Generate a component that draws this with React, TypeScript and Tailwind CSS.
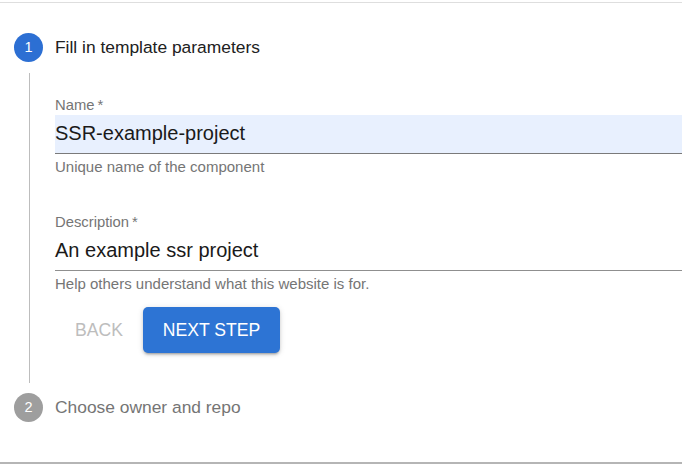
import React from "react";

const font = { fontFamily: '"Liberation Sans", Arial, sans-serif' };

function StepIcon({ n, active }: { n: number; active: boolean }) {
  return (
    <div
      className={`flex h-[29px] w-[29px] shrink-0 items-center justify-center rounded-full text-[14.5px] leading-none text-white ${
        active ? "bg-[#2c6fd3]" : "bg-[#9e9e9e]"
      }`}
    >
      {n}
    </div>
  );
}

export default function App() {
  return (
    <div
      className="relative flex h-[465px] w-[682px] flex-col overflow-hidden bg-white"
      style={font}
    >
      <div className="mt-[2px] h-px w-full bg-[#dedede]" />

      {/* Step 1 header */}
      <div className="mt-[30px] flex items-center gap-[12px] pl-[14px]">
        <StepIcon n={1} active />
        <span className="-mt-[2px] text-[17.4px] leading-[20px] text-[#212121]">
          Fill in template parameters
        </span>
      </div>

      {/* Step 1 content */}
      <div className="ml-[29px] mt-[11px] border-l border-[#bdbdbd] pb-[30px] pl-[25px] pt-[24px]">
        <div className="text-[14.8px] leading-[17px] text-[#757575]">
          Name<span className="ml-[3px]">*</span>
        </div>
        <div className="mt-[1px] h-[39px] border-b border-[#7a7a7a] bg-[#e8f0fe] pt-[7px]">
          <div className="text-[20px] leading-[23px] text-[#1a1a1a]">
            SSR-example-project
          </div>
        </div>
        <div className="mt-[4px] text-[15px] leading-[17px] text-[#757575]">
          Unique name of the component
        </div>

        <div className="mt-[39px] text-[14.8px] leading-[17px] text-[#757575]">
          Description<span className="ml-[3px]">*</span>
        </div>
        <div className="mt-[1px] h-[39px] border-b border-[#8f8f8f] pt-[7px]">
          <div className="text-[20px] leading-[23px] text-[#1a1a1a]">
            An example ssr project
          </div>
        </div>
        <div className="mt-[4px] text-[15px] leading-[17px] text-[#757575]">
          Help others understand what this website is for.
        </div>

        <div className="mt-[15px] flex items-center">
          <button className="flex h-[46px] w-[88px] items-center justify-center text-[17.6px] text-[#bdbdbd]">
            BACK
          </button>
          <button className="flex h-[46px] w-[137px] items-center justify-center rounded-[5px] bg-[#2d74d4] text-[17.6px] font-medium text-white shadow-[0_3px_2px_-2px_rgba(0,0,0,0.2),0_2px_3px_0_rgba(0,0,0,0.14),0_1px_6px_0_rgba(0,0,0,0.12)]">
            NEXT STEP
          </button>
        </div>
      </div>

      {/* Step 2 header */}
      <div className="mt-[10px] flex items-center gap-[12px] pl-[14px]">
        <StepIcon n={2} active={false} />
        <span className="-mt-[2px] text-[17.4px] leading-[20px] text-[#757575]">
          Choose owner and repo
        </span>
      </div>

      <div className="absolute bottom-[1px] left-0 h-[2px] w-full bg-[#b5b5b5]" />
    </div>
  );
}
